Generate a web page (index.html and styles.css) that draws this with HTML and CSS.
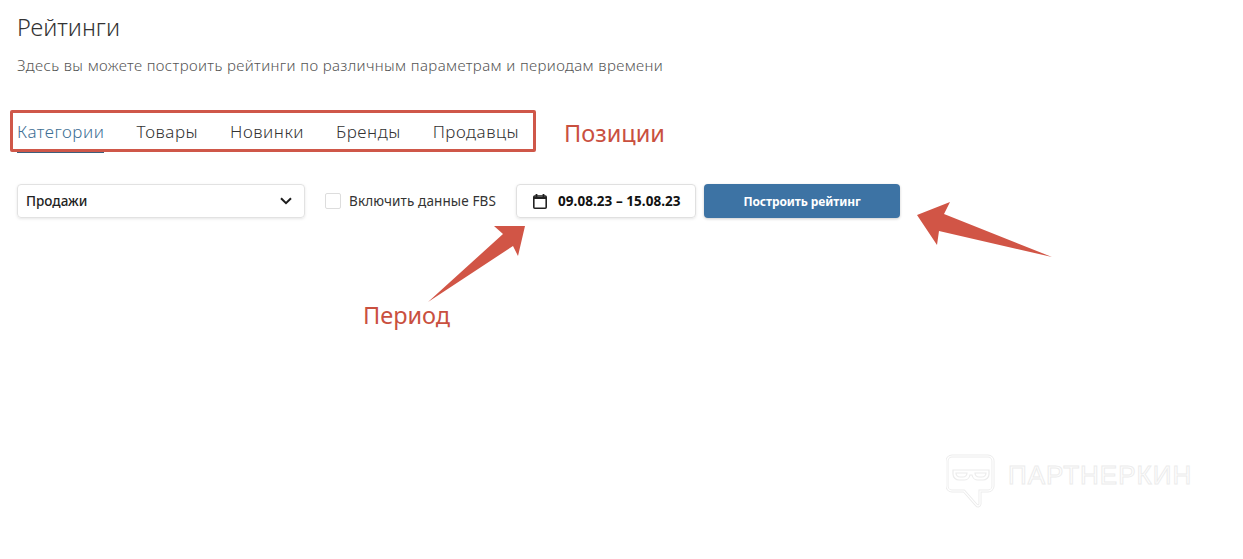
FILE: index.html
```html
<!DOCTYPE html>
<html lang="ru">
<head>
<meta charset="utf-8">
<title>Рейтинги</title>
<link rel="stylesheet" href="styles.css">
</head>
<body>
<main class="page">
  <h1 class="title">Рейтинги</h1>
  <p class="subtitle">Здесь вы можете построить рейтинги по различным параметрам и периодам времени</p>
  <nav class="tabs">
    <a class="tab tab-active">Категории</a>
    <a class="tab">Товары</a>
    <a class="tab">Новинки</a>
    <a class="tab">Бренды</a>
    <a class="tab">Продавцы</a>
  </nav>
  <div class="controls">
    <div class="select">
      <span>Продажи</span>
      <svg class="chevron" width="12" height="8" viewBox="0 0 12 8"><path d="M1 1.200l5 5 5-5" fill="none" stroke="#1c1c1c" stroke-width="2"/></svg>
    </div>
    <label class="check"><span class="box"></span><span class="check-text">Включить данные FBS</span></label>
    <div class="date">
      <svg width="14" height="15" viewBox="0 0 14 15"><path d="M3.500 0v3M10.500 0v3" stroke="#222" stroke-width="1.800" fill="none"/><rect x="0.800" y="2" width="12.400" height="12.200" rx="1" fill="none" stroke="#222" stroke-width="1.600"/><path d="M1 4h12" stroke="#222" stroke-width="2"/></svg>
      <span>09.08.23 – 15.08.23</span>
    </div>
    <button class="build">Построить рейтинг</button>
  </div>
</main>

<div class="mark-box"></div>
<span class="mark-label label-pos">Позиции</span>
<span class="mark-label label-per">Период</span>
<svg class="arrows" width="1243" height="559" viewBox="0 0 1243 559">
  <polygon points="525,226 494,226 503,234 428,302 513,246 518,256" fill="#d15546"/>
  <polygon points="917,215 950,202 944,214 1052,257 939,231 937,245" fill="#d15546"/>
</svg>
<div class="logo">
  <svg width="50" height="54" viewBox="0 0 50 54">
    <path class="logo-line" d="M6 2h36a5 5 0 0 1 5 5v25a5 5 0 0 1-5 5h-8v13a2 2 0 0 1-3.500 1.200L18 37H6a5 5 0 0 1-5-5V7a5 5 0 0 1 5-5z"/>
    <path class="logo-core" d="M6 2h36a5 5 0 0 1 5 5v25a5 5 0 0 1-5 5h-8v13a2 2 0 0 1-3.500 1.200L18 37H6a5 5 0 0 1-5-5V7a5 5 0 0 1 5-5z"/>
    <path class="logo-glasses" d="M7 16h36v4a6 6 0 0 1-6 6h-5a6 6 0 0 1-6-5h-2a6 6 0 0 1-6 5h-5a6 6 0 0 1-6-6z"/>
    <path class="logo-glasses" d="M10 19h11a4 4 0 0 1-4 4h-3a4 4 0 0 1-4-4zM29 19h11a4 4 0 0 1-4 4h-3a4 4 0 0 1-4-4z"/>
  </svg>
  <span class="logo-text">ПАРТНЕРКИН</span>
</div>
</body>
</html>
```
FILE: styles.css
```css
* { box-sizing: border-box; }
html, body { margin: 0; height: 100%; background: #fff; }
body { font-family: "Noto Sans", "Open Sans", sans-serif; color: #222; position: relative; overflow: hidden; }
.page { padding: 12px 17px 0; }
.title { margin: 0; font-size: 23.500px; line-height: 30px; font-weight: 300; color: #333; }
.subtitle { margin: 13px 0 0; font-size: 15px; line-height: 20px; font-weight: 300; color: #555; letter-spacing: 0.38px; }
.tabs { display: flex; gap: 32px; margin-top: 35px; height: 42px; }
.tab { font-size: 17px; line-height: 24px; padding-top: 10px; height: 43px; color: #333; font-weight: 300; letter-spacing: 0.52px; }
.tab-active { color: #3e6f95; border-bottom: 2px solid #3d5f7c; }
.controls { display: flex; align-items: center; margin-top: 32px; height: 34px; }
.select { width: 288px; height: 34px; display: flex; align-items: center; justify-content: space-between; padding: 0 12px 0 8px; border: 1px solid #e2e2e2; border-radius: 4px; box-shadow: 0 1px 3px rgba(0,0,0,.1); font-size: 13.500px; font-weight: 500; color: #222; }
.check { display: flex; align-items: center; gap: 8px; margin: 0 20px; font-size: 13.500px; color: #333; width: 171px; letter-spacing: 0.12px; }
.check-text { white-space: nowrap; }
.box { width: 16px; height: 16px; border: 1px solid #ddd; border-radius: 2px; flex: none; }
.date { width: 180px; height: 34px; display: flex; align-items: center; justify-content: flex-start; gap: 11px; padding-left: 16px; border: 1px solid #e0e0e0; border-radius: 4px; box-shadow: 0 1px 3px rgba(0,0,0,.1); font-size: 13.500px; font-weight: 700; color: #111; letter-spacing: 0.05px; }
.build { width: 196px; height: 34px; margin-left: 8px; border: 0; border-radius: 4px; background: #3d73a4; box-shadow: 0 1px 3px rgba(0,0,0,.2); color: #fff; font: 700 12px "Noto Sans", sans-serif; letter-spacing: -0.1px; }
.mark-box { position: absolute; left: 10px; top: 110px; width: 526px; height: 42px; border: 3px solid #cf5749; border-radius: 2px; }
.mark-label { position: absolute; font-size: 23.500px; line-height: 32px; color: #c9503f; }
.label-pos { left: 564px; top: 117px; }
.label-per { left: 363px; top: 299px; }
.arrows { position: absolute; left: 0; top: 0; pointer-events: none; }
.logo { position: absolute; left: 946px; top: 454px; display: flex; align-items: center; gap: 12px; }
.logo-line { fill: none; stroke: #ececec; stroke-width: 3; }
.logo-core { fill: none; stroke: #fff; stroke-width: 1.200; }
.logo-glasses { fill: none; stroke: #ececec; stroke-width: 1.200; }
.logo-text { font-family: "Liberation Sans", sans-serif; font-size: 26px; line-height: 30px; margin-bottom: 13px; letter-spacing: 1px; color: transparent; -webkit-text-stroke: 1px #ececec; }
```
